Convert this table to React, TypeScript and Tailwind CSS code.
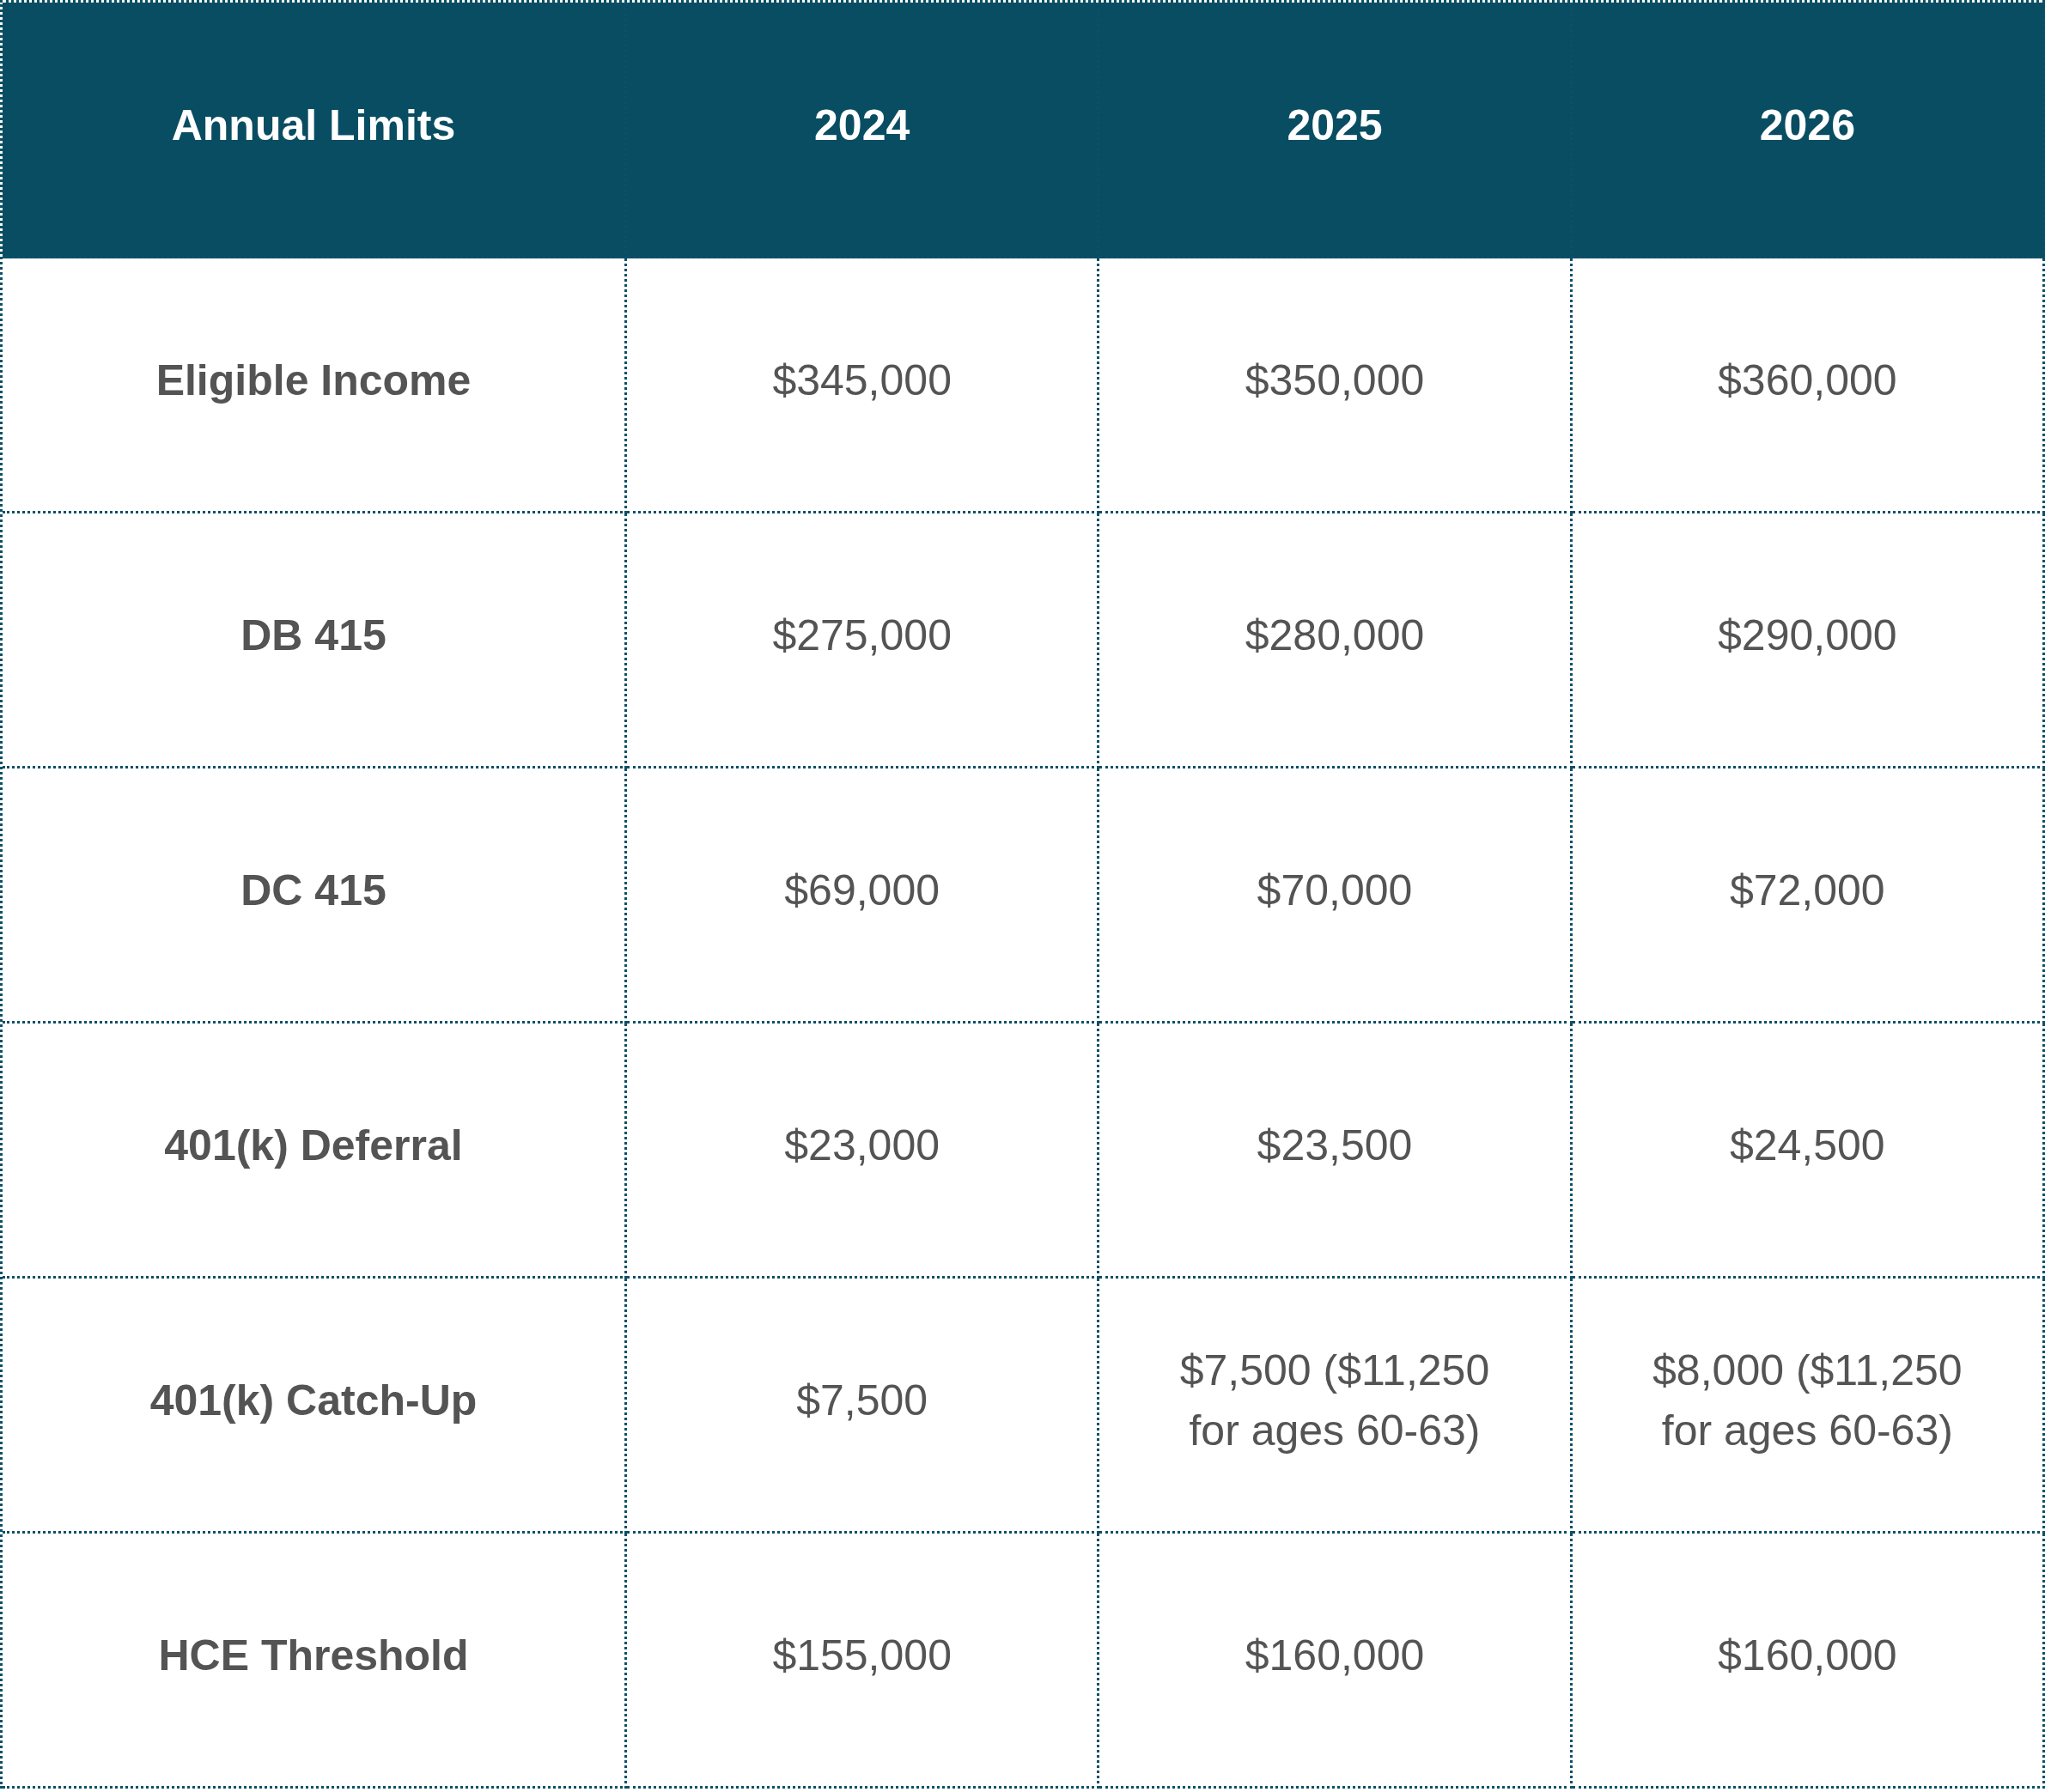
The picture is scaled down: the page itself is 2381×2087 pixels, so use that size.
const rows: { label: string; values: string[][] }[] = [
  { label: 'Eligible Income', values: [['$345,000'], ['$350,000'], ['$360,000']] },
  { label: 'DB 415', values: [['$275,000'], ['$280,000'], ['$290,000']] },
  { label: 'DC 415', values: [['$69,000'], ['$70,000'], ['$72,000']] },
  { label: '401(k) Deferral', values: [['$23,000'], ['$23,500'], ['$24,500']] },
  {
    label: '401(k) Catch-Up',
    values: [['$7,500'], ['$7,500 ($11,250', 'for ages 60-63)'], ['$8,000 ($11,250', 'for ages 60-63)']],
  },
  { label: 'HCE Threshold', values: [['$155,000'], ['$160,000'], ['$160,000']] },
];

const years = ['2024', '2025', '2026'];

const cell =
  'flex flex-col items-center justify-center text-center pb-[10px] border-r-[3px] border-b-[3px] border-dotted border-[#0b5068]';

export default function App() {
  return (
    <div className="w-[2381px] min-h-[2087px] bg-white font-['Liberation_Sans',Arial,sans-serif] text-[50px] leading-[1.4]">
      <div className="grid grid-cols-[727px_1fr_1fr_1fr] border-t-[3px] border-l-[3px] border-dotted border-[#0b5068]">
        {/* header */}
        <div className={`${cell} h-[298px] bg-[#094d62] font-bold text-white`}>Annual Limits</div>
        {years.map((y) => (
          <div key={y} className={`${cell} h-[298px] bg-[#094d62] font-bold text-white`}>
            {y}
          </div>
        ))}

        {rows.map((row) => (
          <div key={row.label} className="contents">
            <div className={`${cell} h-[297px] font-bold text-[#545454]`}>{row.label}</div>
            {row.values.map((lines, i) => (
              <div key={i} className={`${cell} h-[297px] text-[#545454]`}>
                {lines.map((line) => (
                  <span key={line}>{line}</span>
                ))}
              </div>
            ))}
          </div>
        ))}
      </div>
    </div>
  );
}
